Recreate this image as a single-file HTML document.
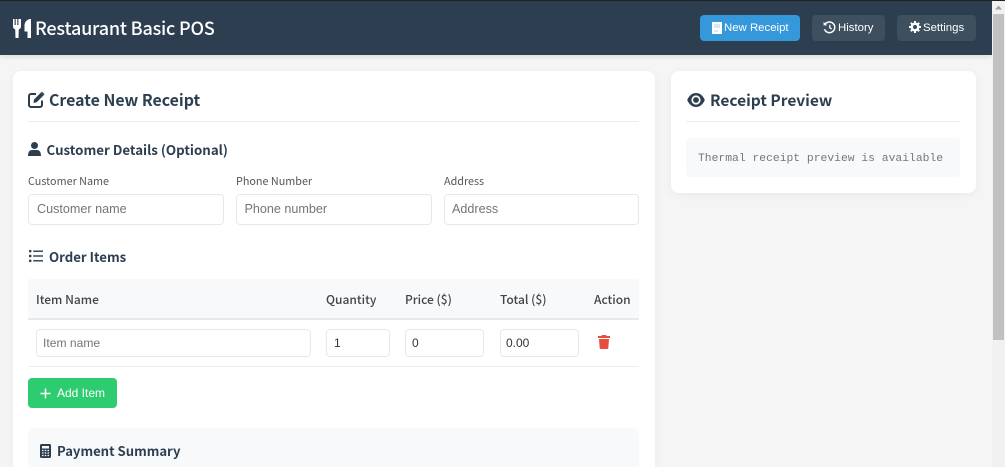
<!DOCTYPE html>
<html><head><meta charset="utf-8">
<style>
*{box-sizing:border-box}
html,body{margin:0;padding:0;width:1005px;height:467px;overflow:hidden;background:#f5f5f5}
body{position:relative;font-family:"Liberation Sans",sans-serif}
.a{position:absolute;white-space:nowrap}
.h{font-family:"Noto Sans CJK SC","Liberation Sans",sans-serif;font-weight:700;color:#2c3e50;line-height:1}
.l{font-family:"Noto Sans CJK SC","Liberation Sans",sans-serif;color:#555;font-size:10.8px;line-height:1}
.card{position:absolute;background:#fff;border-radius:8px;box-shadow:0 2px 10px rgba(0,0,0,.05);overflow:hidden}
.in{position:absolute;background:#fff;border:1px solid #e6e8ea;border-radius:4px;font-size:12.6px;color:#757575;display:flex;align-items:center;white-space:nowrap;padding-bottom:1px}
.btn{position:absolute;top:15px;height:26px;border-radius:4px;color:#fff;font-size:11.4px;line-height:27px;white-space:nowrap}
.th{position:absolute;top:294px;font-family:"Noto Sans CJK SC","Liberation Sans",sans-serif;font-weight:500;font-size:12px;line-height:1;color:#444;white-space:nowrap}
svg{position:absolute;display:block}
</style></head>
<body>
<div class="a" style="left:0;top:0;width:992px;height:55px;background:#2c3e50;box-shadow:0 2px 5px rgba(0,0,0,.1)"></div>
<div class="a" style="left:0;top:0;width:1005px;height:1px;background:#222"></div>

<svg style="left:13px;top:19px" width="18" height="19" viewBox="0 0 18 19" fill="#fff"><path d="M0 0h1.600v6h1.100V0h1.600v6h1.100V0H8v7.500c0 1.500-1 2.500-2.200 2.900L5.500 19h-3l-.3-8.600C1 10 0 9 0 7.500z"/><path d="M17 0h1v19h-3.500v-6.500H11.500V6.500c0-3.500 2.500-6 5.500-6.500z"/></svg>
<div class="a h" style="left:35px;top:19px;font-size:18px;font-weight:500;color:#fff;letter-spacing:-.2px">Restaurant Basic POS</div>

<div class="btn" style="left:700px;width:100px;background:#3498db;padding-left:24px">New Receipt</div>
<svg style="left:712px;top:22px" width="10" height="12" viewBox="0 0 10 12"><path d="M0 0h10v12H0z" fill="#fff"/><path d="M2 3h6M2 5h6M2 9h4" stroke="#a9d3f0" stroke-width="1"/></svg>
<div class="btn" style="left:812px;width:73px;background:#3e4f60;padding-left:26px">History</div>
<svg style="left:823px;top:21px" width="13" height="13" viewBox="0 0 13 13" fill="none" stroke="#fff"><path d="M2.200 3.200A5.300 5.300 0 1 1 1.500 8.200" stroke-width="1.500"/><path d="M.6 .8v3.600h3.600z" fill="#fff" stroke="none"/><path d="M6.800 3.800v3l2 1.200" stroke-width="1.300"/></svg>
<div class="btn" style="left:897px;width:79px;background:#3e4f60;padding-left:26px">Settings</div>
<svg style="left:909px;top:21px" width="12" height="12" viewBox="0 0 12 12"><circle cx="6" cy="6" r="3.300" fill="none" stroke="#fff" stroke-width="2.400"/><path d="M6 0v12M0 6h12M1.800 1.800l8.400 8.400M10.200 1.800l-8.400 8.400" stroke="#fff" stroke-width="2" stroke-dasharray="2 8"/></svg>

<div class="card" style="left:13px;top:71px;width:642px;height:396px;border-radius:8px 8px 0 0"></div>
<div class="card" style="left:671px;top:71px;width:305px;height:122px"></div>

<svg style="left:28px;top:91px" width="17" height="17" viewBox="0 0 17 17"><path d="M8 3H3a2 2 0 0 0-2 2v9a2 2 0 0 0 2 2h9a2 2 0 0 0 2-2V9.500" fill="none" stroke="#2c3e50" stroke-width="2"/><path d="M6 8.500 13 1.500l2.700 2.700-7 7L5.500 12z" fill="#2c3e50"/><path d="M14 .6l2.600 2.600-.9.900-2.600-2.600z" fill="#2c3e50"/></svg>
<div class="a h" style="left:49px;top:92px;font-size:15.900px">Create New Receipt</div>
<div class="a" style="left:28px;top:121px;width:611px;height:1px;background:#ecedef"></div>

<svg style="left:28px;top:142px" width="13" height="14" viewBox="0 0 13 14" fill="#2c3e50"><circle cx="6.500" cy="3.500" r="3.500"/><path d="M0 14c0-4 1.500-6 4-6h5c2.500 0 4 2 4 6z"/></svg>
<div class="a h" style="left:46.500px;top:143px;font-size:13.300px">Customer Details (Optional)</div>

<div class="a l" style="left:28px;top:176px">Customer Name</div>
<div class="a l" style="left:236px;top:176px">Phone Number</div>
<div class="a l" style="left:444px;top:176px">Address</div>
<div class="in" style="left:28px;top:194px;width:196px;height:31px;padding-left:8px">Customer name</div>
<div class="in" style="left:236px;top:194px;width:196px;height:31px;padding-left:7.500px">Phone number</div>
<div class="in" style="left:444px;top:194px;width:195px;height:31px;padding-left:7px">Address</div>

<svg style="left:29px;top:250px" width="14" height="12" viewBox="0 0 14 12" fill="#2c3e50"><rect x="0" y="0" width="2.400" height="2.400" rx=".6"/><rect x="0" y="4.800" width="2.400" height="2.400" rx=".6"/><rect x="0" y="9.600" width="2.400" height="2.400" rx=".6"/><rect x="4.200" y=".5" width="9.800" height="1.400"/><rect x="4.200" y="5.300" width="9.800" height="1.400"/><rect x="4.200" y="10.100" width="9.800" height="1.400"/></svg>
<div class="a h" style="left:49px;top:250px;font-size:13.200px">Order Items</div>

<div class="a" style="left:28px;top:279px;width:611px;height:41px;background:#f8f9fa;border-bottom:2px solid #e5e8ec"></div>
<div class="th" style="left:36px">Item Name</div>
<div class="th" style="left:326px">Quantity</div>
<div class="th" style="left:405px">Price ($)</div>
<div class="th" style="left:500px">Total ($)</div>
<div class="th" style="left:594px">Action</div>

<div class="in" style="left:36px;top:329px;width:275px;height:28px;padding-left:6px;font-size:12.100px">Item name</div>
<div class="in" style="left:326px;top:329px;width:64px;height:28px;padding-left:7px;font-size:12px;color:#333">1</div>
<div class="in" style="left:405px;top:329px;width:79px;height:28px;padding-left:6px;font-size:12px;color:#333">0</div>
<div class="in" style="left:500px;top:329px;width:79px;height:28px;padding-left:5px;font-size:12px;color:#333">0.00</div>
<svg style="left:598px;top:335px" width="12" height="14" viewBox="0 0 12 14" fill="#e74c3c"><path d="M4 0h4l.6 1H12v2H0V1h3.400z"/><path d="M1 4h10l-.7 9a1 1 0 0 1-1 1H2.700a1 1 0 0 1-1-1z"/></svg>
<div class="a" style="left:28px;top:366px;width:611px;height:1px;background:#eceef0"></div>

<div class="a" style="left:28px;top:378px;width:89px;height:30px;background:#2ecc71;border-radius:4px;color:#fff;font-size:12px;line-height:30px;padding-left:29px">Add Item</div>
<svg style="left:40px;top:388px" width="11" height="11" viewBox="0 0 11 11"><path d="M5.500 .5v10M.5 5.500h10" stroke="#fff" stroke-width="1.500"/></svg>

<div class="a" style="left:28px;top:428px;width:611px;height:39px;background:#f8f9fa;border-radius:6px 6px 0 0"></div>
<svg style="left:40px;top:444px" width="11" height="14" viewBox="0 0 11 14"><rect width="11" height="14" rx="1.500" fill="#2c3e50"/><rect x="2" y="2" width="7" height="2.500" fill="#f8f9fa"/><path d="M2 6.500h1.500M4.750 6.500h1.500M7.500 6.500H9M2 9h1.500M4.750 9h1.500M7.500 9H9M2 11.500h1.500M4.750 11.500h1.500M7.500 11.500H9" stroke="#f8f9fa" stroke-width="1.200"/></svg>
<div class="a h" style="left:57px;top:444px;font-size:13.100px">Payment Summary</div>

<svg style="left:687px;top:93px" width="18" height="14" viewBox="0 0 18 14"><path d="M9 0C5 0 1.800 3 .2 7c1.600 4 4.800 7 8.800 7s7.200-3 8.800-7C16.200 3 13 0 9 0z" fill="#2c3e50"/><circle cx="9" cy="7" r="4.600" fill="#fff"/><circle cx="9" cy="7" r="2.900" fill="#2c3e50"/></svg>
<div class="a h" style="left:710px;top:93px;font-size:15.500px">Receipt Preview</div>
<div class="a" style="left:686px;top:121px;width:274px;height:1px;background:#ecedef"></div>
<div class="a" style="left:686px;top:138px;width:274px;height:39px;background:#f8f9fa;border-radius:4px"></div>
<div class="a" style="left:698px;top:153px;font-family:'Liberation Mono',monospace;font-size:11.350px;line-height:13px;color:#777">Thermal receipt preview is available</div>

<div class="a" style="left:992px;top:1px;width:13px;height:466px;background:#f1f1f1"></div>
<div class="a" style="left:993px;top:14px;width:11px;height:326px;background:#c1c1c1"></div>
<svg style="left:995px;top:5px" width="7" height="5" viewBox="0 0 7 5"><path d="M3.500 .5 7 4.500H0z" fill="#a3a3a3"/></svg>
</body></html>
